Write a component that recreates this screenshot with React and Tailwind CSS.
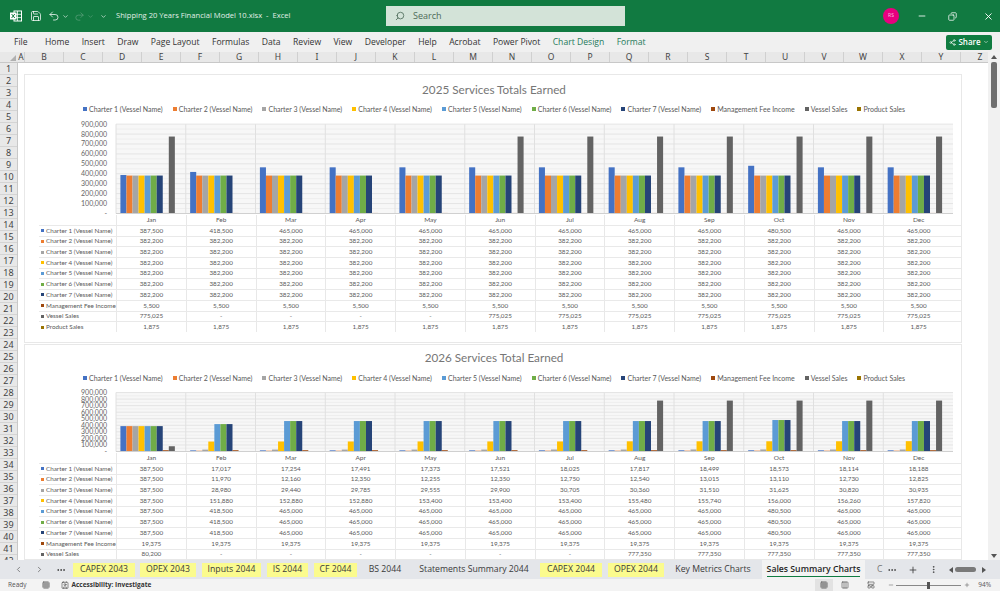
import { ChevronLeft, ChevronRight, ChevronDown, Ellipsis, EllipsisVertical, Grid3x3, LayoutPanelTop, Minus, Plus, Redo2, Save, Search, Share2, Undo2, X, Copy, Columns3, Contact } from 'lucide-react';

const colors = ['#4472c4', '#ed7d31', '#a5a5a5', '#ffc000', '#5b9bd5', '#70ad47', '#264478', '#9e480e', '#636363', '#997300'];
const names = [
  'Charter 1 (Vessel Name)',
  'Charter 2 (Vessel Name)',
  'Charter 3 (Vessel Name)',
  'Charter 4 (Vessel Name)',
  'Charter 5 (Vessel Name)',
  'Charter 6 (Vessel Name)',
  'Charter 7 (Vessel Name)',
  'Management Fee Income',
  'Vessel Sales',
  'Product Sales',
];
const months = ['Jan', 'Feb', 'Mar', 'Apr', 'May', 'Jun', 'Jul', 'Aug', 'Sep', 'Oct', 'Nov', 'Dec'];
const ribbon = ['File', 'Home', 'Insert', 'Draw', 'Page Layout', 'Formulas', 'Data', 'Review', 'View', 'Developer', 'Help', 'Acrobat', 'Power Pivot'];

const fill = (v) => Array(12).fill(v);
const c5 = [418500, 465000, 465000, 465000, 465000, 465000, 465000, 465000, 480500, 465000, 465000];

const data2025 = [
  [387500, 418500, 465000, 465000, 465000, 465000, 465000, 465000, 465000, 480500, 465000, 465000],
  fill(382200),
  fill(382200),
  fill(382200),
  fill(382200),
  fill(382200),
  fill(382200),
  fill(5500),
  [775025, 0, 0, 0, 0, 775025, 775025, 775025, 775025, 775025, 775025, 775025],
  fill(1875),
];

const data2026 = [
  [387500, 17017, 17254, 17491, 17373, 17521, 18025, 17817, 18499, 18573, 18114, 18188],
  [387500, 11970, 12160, 12350, 12255, 12350, 12750, 12540, 13015, 13110, 12730, 12825],
  [387500, 28980, 29440, 29785, 29555, 29900, 30705, 30360, 31510, 31625, 30820, 30935],
  [387500, 151880, 152880, 152880, 153400, 153400, 153400, 155480, 155740, 156000, 156260, 157820],
  [387500, ...c5],
  [387500, ...c5],
  [387500, ...c5],
  fill(19375),
  [80200, 0, 0, 0, 0, 0, 0, 777350, 777350, 777350, 777350, 777350],
  fill(1875),
];

function Plot({ series, height, scale }) {
  const base = height - 0.5;
  const ticks = [1, 2, 3, 4, 5, 6, 7, 8, 9];
  return (
    <svg width="936" height={height + 1} className="block shrink-0 overflow-visible">
      <rect x="91" y={base - 9 * scale} width="837" height={9 * scale} fill="#f7f7f7" />
      {ticks.map((t) => (
        <g key={t}>
          <line x1="91" x2="928" y1={base - t * scale} y2={base - t * scale} stroke="#e4e4e4" />
          <line x1="91" x2="928" y1={base - (t - 0.5) * scale} y2={base - (t - 0.5) * scale} stroke="#eeeeee" />
          <text x="82" y={base - t * scale + 2.5} textAnchor="end" fontSize="7" fill="#666" fontFamily="Lato, sans-serif">
            {t}00,000
          </text>
        </g>
      ))}
      <text x="82" y={base + 2} textAnchor="end" fontSize="7" fill="#666" fontFamily="Lato, sans-serif">-</text>
      {months.map((m, i) => (
        <line key={m} x1={91 + i * 69.75} x2={91 + i * 69.75} y1={base - 9 * scale} y2={base} stroke="#e0e0e0" />
      ))}
      {series.map((row, s) =>
        row.map((v, i) => {
          const h = (v / 100000) * scale;
          return <rect key={i} x={95.4 + i * 69.75 + s * 6.05} y={base - h} width="6.05" height={h} fill={colors[s]} />;
        }),
      )}
      <line x1="91" x2="928" y1={base} y2={base} stroke="#d0d0d0" />
    </svg>
  );
}

function Table({ series, rows }) {
  return (
    <div className="ml-[14px] text-[6.3px] leading-none text-[#595959]">
      <div className="grid h-[10px] grid-cols-[77px_repeat(12,69.75px)] items-center">
        <div />
        {months.map((m) => (
          <div key={m} className="flex h-full items-center justify-center border-l border-[#e8e8e8] pt-px text-[6.5px]">{m}</div>
        ))}
      </div>
      {series.slice(0, rows).map((row, s) => (
        <div key={names[s]} className="grid h-[10.7px] grid-cols-[77px_repeat(12,69.75px)] items-center border-t border-[#e9e9e9]">
          <div className="flex items-center gap-[2px] pl-[2px] whitespace-nowrap">
            <span className="h-[3px] w-[3px] shrink-0" style={{ backgroundColor: colors[s] }} />
            {names[s]}
          </div>
          {row.map((v, i) => (
            <div key={i} className="flex h-full items-center justify-center border-l border-[#e8e8e8]">
              {v === 0 ? '-' : v.toLocaleString('en-US')}
            </div>
          ))}
        </div>
      ))}
    </div>
  );
}

function Legend({ className }) {
  return (
    <div className={`flex h-[10px] items-center justify-center gap-[10px] pl-[2px] text-[7px] leading-none text-[#595959] ${className}`}>
      {names.map((n, i) => (
        <span key={n} className="flex items-center gap-[2px] whitespace-nowrap">
          <span className="h-[4px] w-[4px]" style={{ backgroundColor: colors[i] }} />
          {n}
        </span>
      ))}
    </div>
  );
}

function Chart({ title, series, rows, scale, titleClass, legendClass, plotHeight, panelClass }) {
  return (
    <div className={`w-[938px] shrink-0 border border-[#e8e8e8] bg-white font-['Lato',sans-serif] ${panelClass}`}>
      <div className={`flex items-center justify-center pl-[2px] text-[11.7px] leading-none text-[#767676] ${titleClass}`}>{title}</div>
      <Legend className={legendClass} />
      <Plot series={series} height={plotHeight} scale={scale} />
      <Table series={series} rows={rows} />
    </div>
  );
}

function ExcelLogo() {
  return (
    <svg width="12" height="12" viewBox="0 0 12 12" className="shrink-0">
      <rect x="4" y="1" width="7.5" height="10" fill="none" stroke="#fff" />
      <path d="M7.5 1v10M4 4.3h7.5M4 7.6h7.5" stroke="#fff" strokeWidth="0.8" />
      <rect x="0" y="2.5" width="6.5" height="7" fill="#fff" />
      <path d="M1.6 4l3.2 4M4.8 4L1.6 8" stroke="#107c41" strokeWidth="1" />
    </svg>
  );
}

function TitleBar() {
  return (
    <div className="flex h-8 shrink-0 items-center bg-[#117a41] font-['Open_Sans',sans-serif] text-white">
      <div className="flex w-[386px] items-center pl-[10px]">
        <ExcelLogo />
        <Save size={12} strokeWidth={1.5} className="ml-[8px]" />
        <Undo2 size={12} strokeWidth={1.5} className="ml-[6px]" />
        <ChevronDown size={7} className="ml-[2px]" />
        <Redo2 size={11} strokeWidth={1.5} className="ml-[5px] text-[#5fa27e]" />
        <ChevronDown size={7} className="ml-[2px] text-[#5fa27e]" />
        <ChevronDown size={7} className="ml-[6px]" />
        <span className="ml-[9px] text-[7.6px] whitespace-nowrap text-[#e2efe8]">Shipping 20 Years Financial Model 10.xlsx&nbsp; -&nbsp; Excel</span>
      </div>
      <div className="flex h-5 w-[239px] items-center gap-[8px] bg-[#d3e3d8] pl-[9px] text-[9px] text-[#4d6b59]">
        <Search size={10} className="-scale-x-100" />
        Search
      </div>
      <div className="flex flex-1 items-center pl-[258px]">
        <span className="flex h-4 w-4 items-center justify-center rounded-full bg-[#e8007f] text-[5px] text-[#f8c4e0]">RS</span>
        <Minus size={10} className="ml-[18px]" />
        <Copy size={9} strokeWidth={2} className="ml-[21px] -scale-x-100" />
        <X size={11} className="ml-[26px]" />
      </div>
    </div>
  );
}

function RibbonTabs() {
  return (
    <div className="flex h-5 shrink-0 items-center bg-[#f0f0f0] pl-[14px] font-['Open_Sans',sans-serif] text-[8.6px] whitespace-nowrap text-[#333]">
      <div className="flex w-[932px] items-center gap-[12.4px]">
        {ribbon.map((t) => (
          <span key={t} className={t === 'File' ? 'mr-[5px]' : ''}>{t}</span>
        ))}
        <span className="text-[#1f7a5a]">Chart Design</span>
        <span className="text-[#1f7a5a]">Format</span>
      </div>
      <div className="flex h-[15px] w-[46px] items-center justify-center gap-[2px] rounded-[2px] bg-[#107c41] text-[8px] font-semibold text-white">
        <Share2 size={7} />
        Share
        <ChevronDown size={6} />
      </div>
    </div>
  );
}

function ColumnHeader() {
  const letters = 'BCDEFGHIJKLMNOPQRSTUVWXYZ'.split('');
  return (
    <div className="flex h-[11px] shrink-0 overflow-hidden border-b border-[#c8c8c8] bg-[#e8e8e8] text-[8.5px] leading-none text-[#444]">
      <div className="flex w-[18px] shrink-0 items-end justify-end pr-[2px] pb-[1px]">
        <span className="h-0 w-0 border-b-[6px] border-l-[6px] border-b-[#b0b0b0] border-l-transparent" />
      </div>
      <div className="flex w-[7px] shrink-0 items-center justify-center border-r border-[#d0d0d0]">A</div>
      {letters.map((l) => (
        <div key={l} className="flex w-[39px] shrink-0 items-center justify-center border-r border-[#d0d0d0]">{l}</div>
      ))}
    </div>
  );
}

function RowHeader() {
  const rows = Array.from({ length: 42 }, (_, i) => i + 1);
  return (
    <div className="w-[18px] shrink-0 border-r border-[#c8c8c8] bg-[#e8e8e8] text-[9px] leading-none text-[#444]">
      {rows.map((r) => (
        <div key={r} className="flex h-3 items-center justify-center border-b border-[#d4d4d4]">{r}</div>
      ))}
    </div>
  );
}

function Scrollbar() {
  return (
    <div className="flex w-3 shrink-0 flex-col items-center bg-[#f1f1f1] pt-[3px]">
      <span className="h-0 w-0 border-x-[3px] border-b-[4px] border-x-transparent border-b-[#555]" />
      <div className="mt-[3px] h-[46px] w-[6px] rounded-[2px] bg-[#6f6f6f]" />
      <span className="mt-auto mb-[2px] h-0 w-0 border-x-[3px] border-t-[4px] border-x-transparent border-t-[#555]" />
    </div>
  );
}

const sheets = [
  { label: 'CAPEX 2043', cls: 'ml-[3px] w-[62px] bg-[#fbfb8e]' },
  { label: 'OPEX 2043', cls: 'ml-[5px] w-[56px] bg-[#fbfb8e]' },
  { label: 'Inputs 2044', cls: 'ml-[6px] w-[59px] bg-[#fbfb8e]' },
  { label: 'IS 2044', cls: 'ml-[6px] w-[41px] bg-[#fbfb8e]' },
  { label: 'CF 2044', cls: 'ml-[6px] w-[43px] bg-[#fbfb8e]' },
  { label: 'BS 2044', cls: 'w-[56px]' },
  { label: 'Statements Summary 2044', cls: 'w-[122px]' },
  { label: 'CAPEX 2044', cls: 'ml-[5px] w-[62px] bg-[#fbfb8e]' },
  { label: 'OPEX 2044', cls: 'ml-[6px] w-[56px] bg-[#fbfb8e]' },
  { label: 'Key Metrics Charts', cls: 'w-[98px]' },
];

function SheetTabs() {
  return (
    <div className="flex h-[19px] shrink-0 items-center bg-[#e4e6ea] font-['Open_Sans',sans-serif] text-[8.7px] whitespace-nowrap text-[#3a3a3a]">
      <div className="flex w-[70px] shrink-0 items-center pl-[14px] text-[#666]">
        <ChevronLeft size={9} />
        <ChevronRight size={9} className="ml-[12px]" />
        <Ellipsis size={10} className="ml-[12px] text-[#333]" />
      </div>
      {sheets.map((s) => (
        <div key={s.label} className={`mt-px flex h-[14px] shrink-0 items-center justify-center ${s.cls}`}>{s.label}</div>
      ))}
      <div className="flex h-[19px] w-[103px] shrink-0 items-center justify-center bg-[#f3f3f3] font-semibold text-[#1f1f1f]">
        <span className="border-b border-[#107c41] leading-[14px]">Sales Summary Charts</span>
      </div>
      <span className="ml-[12px] w-[8px] overflow-hidden text-[#777]">C</span>
      <Ellipsis size={10} className="ml-[2px]" />
      <Plus size={10} className="ml-[11px]" />
      <EllipsisVertical size={9} className="ml-[11px]" />
      <span className="ml-[11px] h-0 w-0 border-y-[3px] border-r-[4px] border-y-transparent border-r-[#555]" />
      <span className="ml-[2px] h-[5px] w-[21px] rounded-[3px] bg-[#7a7a7a]" />
      <span className="ml-[6px] h-0 w-0 border-y-[3px] border-l-[4px] border-y-transparent border-l-[#555]" />
    </div>
  );
}

function StatusBar() {
  return (
    <div className="flex h-3 shrink-0 items-center bg-[#f3f3f3] font-['Open_Sans',sans-serif] text-[6.5px] whitespace-nowrap text-[#555]">
      <span className="ml-[8px]">Ready</span>
      <Grid3x3 size={8} className="ml-[15px]" />
      <Contact size={8} className="ml-[11px]" />
      <span className="ml-[3px] font-bold text-[#333]">Accessibility: Investigate</span>
      <div className="ml-[664px] flex h-3 w-[18px] items-center justify-center bg-[#e2e2e2]">
        <Grid3x3 size={8} />
      </div>
      <Columns3 size={8} className="ml-[8px]" />
      <LayoutPanelTop size={8} className="ml-[18px]" />
      <Minus size={6} className="ml-[13px]" />
      <div className="ml-[2px] flex h-[1px] w-[65px] items-center bg-[#888] pl-[31px]">
        <span className="h-[7px] w-[3px] bg-[#555]" />
      </div>
      <Plus size={6} className="ml-[3px]" />
      <span className="ml-[8px]">94%</span>
    </div>
  );
}

export default function App() {
  return (
    <div className="flex h-[591px] w-[1000px] flex-col overflow-hidden bg-white">
      <TitleBar />
      <RibbonTabs />
      <div className="flex min-h-0 flex-1">
        <div className="flex min-w-0 flex-1 flex-col">
          <ColumnHeader />
          <div className="flex min-h-0 flex-1 overflow-hidden">
            <RowHeader />
            <div className="flex flex-col pt-[11px] pl-[6px]">
              <Chart
                title="2025 Services Totals Earned"
                series={data2025}
                rows={10}
                scale={9.93}
                plotHeight={90}
                titleClass="h-[29px]"
                legendClass="mb-[10px]"
                panelClass="h-[269px]"
              />
              <Chart
                title="2026 Services Total Earned"
                series={data2026}
                rows={9}
                scale={6.55}
                plotHeight={59}
                titleClass="h-[25px]"
                legendClass="mt-[3px] mb-[10px]"
                panelClass="mt-px"
              />
            </div>
          </div>
        </div>
        <Scrollbar />
      </div>
      <SheetTabs />
      <StatusBar />
    </div>
  );
}
